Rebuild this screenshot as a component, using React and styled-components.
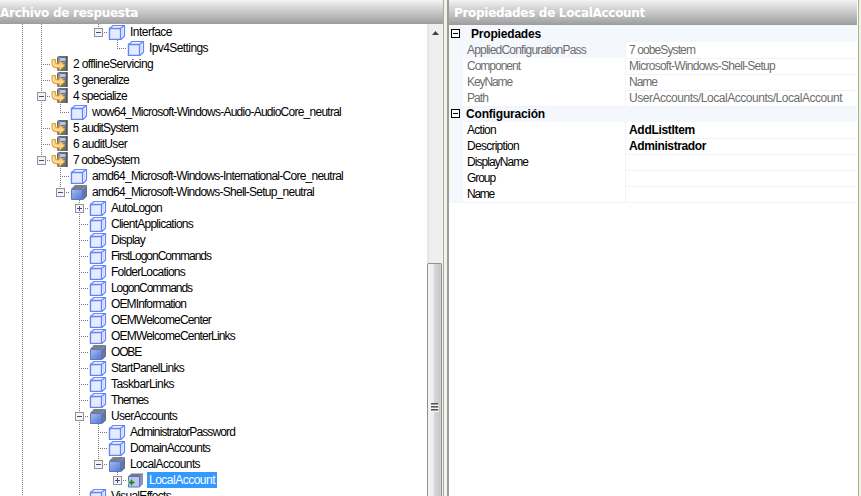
import React, { useLayoutEffect, useRef, useState } from "react";
import styled, { createGlobalStyle, css } from "styled-components";

const GlobalStyle = createGlobalStyle`
  body { margin: 0; background: #fff; overflow: hidden; }
  *, *::before, *::after { box-sizing: border-box; }
`;

const Window = styled.div`
  display: flex;
  width: 861px;
  height: 496px;
  overflow: hidden;
  background: #f0f0f0;
  color: #000;
  font: 12px/16px "Liberation Sans", Arial, sans-serif;
`;

const AnswerPane = styled.section`
  flex: none;
  width: 443px;
  display: flex;
  flex-direction: column;
`;

const PropertyPane = styled.section`
  flex: none;
  width: 409px;
  display: flex;
  flex-direction: column;
  padding-right: 1px;
  background: #fff;
`;

const Splitter = styled.div`
  flex: none;
  width: 6px;
  background: #f2f2f0;
  border-left: 1px solid #a3b588;
  border-right: 2px solid #9aa28f;
`;

const RightEdge = styled.div`
  flex: 1;
  background: #f0f0f0;
  border-left: 1px solid #9dbb77;
`;

const TitleBar = styled.header`
  flex: none;
  height: ${(p) => p.$height}px;
  padding-left: ${(p) => p.$inset}px;
  overflow: hidden;
  background: linear-gradient(#f4f4f4 0%, #dadada 28%, #bcbcbc 65%, #9c9c9c 100%);
  color: #fff;
  font: bold 12px/26px "DejaVu Sans", Verdana, sans-serif;
`;

const PaneBody = styled.div`
  flex: 1;
  min-height: 0;
  display: flex;
  background: #fff;
`;

const Tree = styled.div`
  flex: 1;
  min-width: 0;
  padding-left: 13px;
  overflow: hidden;
`;

const TreeRow = styled.div`
  display: flex;
  height: 16px;
`;

const IconSlot = styled.span`
  flex: none;
  width: 20px;
  height: 16px;
  svg { display: block; }
`;

const Label = styled.span`
  height: 16px;
  padding: 0 2px;
  ${(p) => p.$selected && css`
    background: #3399ff;
    color: #fff;
  `}
`;

const Spaced = styled.span`
  display: inline-block;
  white-space: pre;
`;

const ScrollTrack = styled.div`
  flex: none;
  width: 16px;
  display: flex;
  flex-direction: column;
  background: linear-gradient(90deg, #e5e5e5, #eee 3px, #f0f0f0);
`;

const ScrollArrow = styled.div`
  height: 239px;
  padding: 7px 0 0 5px;
  svg { display: block; }
`;

const ScrollThumb = styled.div`
  flex: 1;
  width: 15px;
  padding: 139px 0 0 3px;
  border: 1px solid #8f8f8f;
  border-bottom: 0;
  border-radius: 2px 2px 0 0;
  background: linear-gradient(90deg, #f4f4f4, #ebebeb 45%, #d6d6da 50%, #c6c6cc 90%, #dcdcdf);
  svg { display: block; }
`;

const PropRow = styled.div`
  display: grid;
  grid-template-columns: 14px 163px 1fr;
  height: 16px;
  color: ${(p) => (p.$muted ? "#6d6d6d" : "#000")};
`;

const Gutter = styled.div`
  background: #f4f7fc;
`;

const NameCell = styled.div`
  padding-left: 4px;
  border-right: 1px solid #f0f4fa;
  border-bottom: 1px solid #f0f4fa;
  background: ${(p) => (p.$active ? "#f4f7fc" : "#fff")};
`;

const ValueCell = styled.div`
  padding-left: 3px;
  border-bottom: 1px solid #f0f4fa;
  font-weight: ${(p) => (p.$bold ? "bold" : "normal")};
`;

const GroupRow = styled.div`
  display: flex;
  height: 16px;
  background: #f4f7fc;
  font-weight: bold;
  svg { flex: none; margin: 3px 0 0 2px; }
`;

const GroupName = styled.span`
  margin-left: ${(p) => p.$gap}px;
`;

const Grid = styled.div`
  padding-top: 1px;
  background: linear-gradient(#f4f7fc 1px, #fff 1px);
`;

// Spreads the letters so that the text occupies the given width.
function FitText({ width, children }) {
  const ref = useRef(null);
  const [spacing, setSpacing] = useState(0);
  useLayoutEffect(() => {
    const natural = ref.current.getBoundingClientRect().width;
    setSpacing((width - natural) / children.length);
  }, [width, children]);
  return <Spaced ref={ref} style={{ letterSpacing: `${spacing}px` }}>{children}</Spaced>;
}

// Guide codes: v line, t branch, l last branch, m/M open node, p/P closed node, . blank.
// Upper case marks the last node of its level.
function Guide({ kind }) {
  const node = "mMpP".includes(kind);
  const ends = "lMP".includes(kind);
  return (
    <svg width="19" height="16" shapeRendering="crispEdges">
      {kind !== "." && (
        <path d={ends ? "M9.5 0V9" : "M9.5 0V16"} stroke="#767676" strokeDasharray="1 1" />
      )}
      {!"v.".includes(kind) && <path d="M9 8.5H19" stroke="#767676" strokeDasharray="1 1" />}
      {node && (
        <>
          <rect x="4" y="3" width="11" height="11" fill="#fff" />
          <rect x="5.5" y="4.5" width="8" height="8" rx="1" fill="#f4f4f4" stroke="#919191" />
          <path d="M7 8.5H12" stroke="#34509c" />
          {"pP".includes(kind) && <path d="M9.5 6V11" stroke="#34509c" />}
        </>
      )}
    </svg>
  );
}

function Cube() {
  return (
    <svg width="18" height="16">
      <path d="M1.5 4.5L5 1.5H16.5V12L13 15.5H1.5Z" fill="#eff3ff" stroke="#6685fa" strokeWidth="1.2" />
      <path d="M2 5h10v10H2z" fill="#e6ecff" />
      <path d="M1.5 4.5H12.5V15.5H1.5ZM12.5 4.5L16 1.5" fill="none" stroke="#6283fa" strokeWidth="1.3" />
      <path d="M14.5 4.5v8" stroke="#c9d6ff" />
    </svg>
  );
}

function FilledCube() {
  return (
    <svg width="18" height="16">
      <defs>
        <linearGradient id="cubeFace" x1="0" y1="0" x2="1" y2="1">
          <stop offset="0" stopColor="#a5bcf4" />
          <stop offset="1" stopColor="#5377cd" />
        </linearGradient>
      </defs>
      <path d="M1 5L5 1H17L13 5Z" fill="#7d7f86" />
      <path d="M13 5L17 1V12L13 16Z" fill="#6475a6" />
      <path d="M1.5 5.5H12.5V15.5H1.5Z" fill="url(#cubeFace)" stroke="#5877c4" />
      <path d="M16.5 2V12L13 15.5" fill="none" stroke="#6b6e78" />
    </svg>
  );
}

function AddedCube() {
  return (
    <svg width="18" height="16">
      <path d="M1 4.5L4.5 1.5H15.5L12.5 4.5Z" fill="#777a84" />
      <path d="M12.5 4.5L15.5 1.5V12L12.5 15Z" fill="#8995bd" stroke="#717891" strokeWidth=".7" />
      <path d="M1.5 4.5H12.5V15H1.5Z" fill="#bcc4ef" stroke="#5571c4" />
      <path d="M1 10.5H8M4.5 7V14" stroke="#d2e6d0" strokeWidth="3" />
      <path d="M1.5 10.5H7.5M4.5 7.5V13.5" stroke="#21783b" strokeWidth="1.8" />
    </svg>
  );
}

function PassIcon() {
  return (
    <svg width="18" height="16">
      <path d="M6 1L8 0H16.5V15H7L6 14Z" fill="#6a6d72" />
      <path d="M7 1H9V14H7Z" fill="#8a8d91" />
      <path d="M9 2H14.5V5H9Z" fill="#a9cdf1" />
      <path d="M10 6H14V7H10ZM10 8H14V9H10Z" fill="#a8a9ab" />
      <path d="M16 0V15" stroke="#414347" />
      <path
        d="M1 3.5H4.5V6.7Q4.5 7.8 6 7.8H8.5V4.5L14 9.5L8.5 14.5V11.8H5Q1 11.8 1 8Z"
        fill="#ffd07a" stroke="#dc9c3c"
      />
      <path d="M2.5 4.5V8Q2.7 9.8 5 9.8H11" fill="none" stroke="#ffe3a0" />
    </svg>
  );
}

function CollapseBox() {
  return (
    <svg width="9" height="9" shapeRendering="crispEdges">
      <rect x=".5" y=".5" width="8" height="8" fill="#fff" stroke="#000" />
      <path d="M2 4.5H7" stroke="#000" />
    </svg>
  );
}

const ICONS = { cube: Cube, filled: FilledCube, added: AddedCube, pass: PassIcon };

const NODES = [
  ["vv..M", "cube", "Interface", 42],
  ["vv...l", "cube", "Ipv4Settings", 59],
  ["vt", "pass", "2 offlineServicing", 80],
  ["vt", "pass", "3 generalize", 56],
  ["vm", "pass", "4 specialize", 54],
  ["vvl", "cube", "wow64_Microsoft-Windows-Audio-AudioCore_neutral", 249],
  ["vt", "pass", "5 auditSystem", 65],
  ["vt", "pass", "6 auditUser", 54],
  ["vM", "pass", "7 oobeSystem", 66],
  ["v.t", "cube", "amd64_Microsoft-Windows-International-Core_neutral", 251],
  ["v.M", "filled", "amd64_Microsoft-Windows-Shell-Setup_neutral", 222],
  ["v..p", "cube", "AutoLogon", 51],
  ["v..t", "cube", "ClientApplications", 82],
  ["v..t", "cube", "Display", 34],
  ["v..t", "cube", "FirstLogonCommands", 100],
  ["v..t", "cube", "FolderLocations", 74],
  ["v..t", "cube", "LogonCommands", 81],
  ["v..t", "cube", "OEMInformation", 75],
  ["v..t", "cube", "OEMWelcomeCenter", 100],
  ["v..t", "cube", "OEMWelcomeCenterLinks", 124],
  ["v..t", "filled", "OOBE", 30],
  ["v..t", "cube", "StartPanelLinks", 73],
  ["v..t", "cube", "TaskbarLinks", 63],
  ["v..t", "cube", "Themes", 37],
  ["v..m", "filled", "UserAccounts", 66],
  ["v..vt", "cube", "AdministratorPassword", 105],
  ["v..vt", "cube", "DomainAccounts", 80],
  ["v..vM", "filled", "LocalAccounts", 70],
  ["v..v.P", "added", "LocalAccount", 66, true],
  ["v..t", "cube", "VisualEffects", 60],
];

const READ_ONLY = [
  ["AppliedConfigurationPass", 119, "7 oobeSystem", 66],
  ["Component", 53, "Microsoft-Windows-Shell-Setup", 146],
  ["KeyName", 45, "Name", 28],
  ["Path", 21, "UserAccounts/LocalAccounts/LocalAccount", 213],
];

const SETTINGS = [
  ["Action", 29, "AddListItem", 66],
  ["Description", 52, "Administrador", 77],
  ["DisplayName", 61],
  ["Group", 28],
  ["Name", 27],
];

function Property({ data, muted, active }) {
  const [name, nameWidth, value, valueWidth] = data;
  return (
    <PropRow $muted={muted}>
      <Gutter />
      <NameCell $active={active}><FitText width={nameWidth}>{name}</FitText></NameCell>
      <ValueCell $bold={!muted}>{value && <FitText width={valueWidth}>{value}</FitText>}</ValueCell>
    </PropRow>
  );
}

export default function App() {
  return (
    <>
      <GlobalStyle />
      <Window>
        <AnswerPane>
          <TitleBar $height={24} $inset={0}>
            <FitText width={138}>Archivo de respuesta</FitText>
          </TitleBar>
          <PaneBody>
            <Tree>
              {NODES.map(([guides, icon, text, width, selected]) => {
                const Icon = ICONS[icon];
                return (
                  <TreeRow key={text}>
                    {[...guides].map((kind, i) => <Guide key={i} kind={kind} />)}
                    <IconSlot><Icon /></IconSlot>
                    <Label $selected={selected}><FitText width={width}>{text}</FitText></Label>
                  </TreeRow>
                );
              })}
            </Tree>
            <ScrollTrack>
              <ScrollArrow>
                <svg width="7" height="4"><path d="M0 4L3.5 0L7 4Z" fill="#404040" /></svg>
              </ScrollArrow>
              <ScrollThumb>
                <svg width="8" height="9" shapeRendering="crispEdges">
                  <path d="M0 .5H7M0 3.5H7M0 6.5H7" stroke="#555" />
                  <path d="M0 1.5H7M0 4.5H7M0 7.5H7" stroke="#999" />
                  <path d="M0 2.5H8M0 5.5H8M0 8.5H8" stroke="#f5f5f5" />
                </svg>
              </ScrollThumb>
            </ScrollTrack>
          </PaneBody>
        </AnswerPane>
        <Splitter />
        <PropertyPane>
          <TitleBar $height={25} $inset={5}>
            <FitText width={191}>Propiedades de LocalAccount</FitText>
          </TitleBar>
          <Grid>
            <GroupRow>
              <CollapseBox />
              <GroupName $gap={11}><FitText width={70}>Propiedades</FitText></GroupName>
            </GroupRow>
            {READ_ONLY.map((row, i) => <Property key={row[0]} data={row} muted active={i === 0} />)}
            <GroupRow>
              <CollapseBox />
              <GroupName $gap={6}><FitText width={79}>Configuración</FitText></GroupName>
            </GroupRow>
            {SETTINGS.map((row) => <Property key={row[0]} data={row} />)}
          </Grid>
        </PropertyPane>
        <RightEdge />
      </Window>
    </>
  );
}
